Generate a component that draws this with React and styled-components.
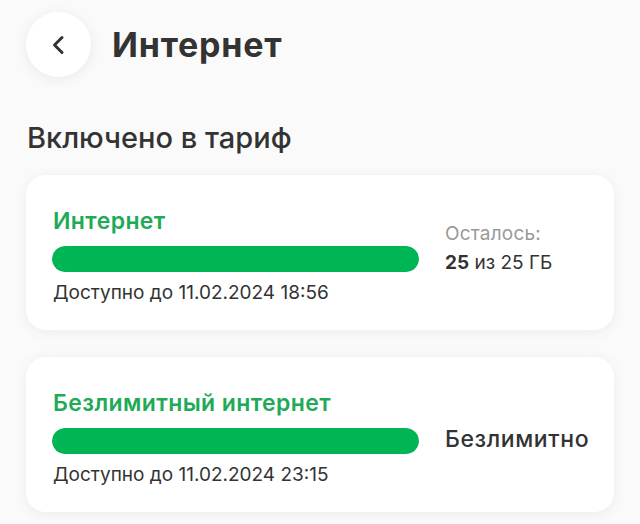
import styled, { createGlobalStyle } from "styled-components";

const packages = [
  {
    id: "base",
    title: "Интернет",
    until: "Доступно до 11.02.2024 18:56",
    left: 25,
    total: 25,
    unit: "ГБ",
  },
  {
    id: "unlim",
    title: "Безлимитный интернет",
    until: "Доступно до 11.02.2024 23:15",
    unlimited: true,
  },
];

export default function App() {
  return (
    <Page>
      <GlobalStyle />
      <Header>
        <BackButton type="button" aria-label="Назад">
          <svg width="14" height="20" viewBox="0 0 14 20" fill="none">
            <path
              d="M11 2.5L3.5 10L11 17.5"
              stroke="#333"
              strokeWidth="3"
              strokeLinecap="round"
              strokeLinejoin="round"
            />
          </svg>
        </BackButton>
        <PageTitle>Интернет</PageTitle>
      </Header>

      <SectionTitle>Включено в тариф</SectionTitle>

      <CardList>
        {packages.map((p) => (
          <Card key={p.id}>
            <Main>
              <CardTitle>{p.title}</CardTitle>
              <Bar>
                <BarFill
                  style={{
                    width: p.unlimited ? "100%" : `${(p.left / p.total) * 100}%`,
                  }}
                />
              </Bar>
              <Until>{p.until}</Until>
            </Main>
            <Side $unlimited={p.unlimited}>
              {p.unlimited ? (
                <Unlimited>Безлимитно</Unlimited>
              ) : (
                <>
                  <SideLabel>Осталось:</SideLabel>
                  <Remain>
                    <b>{p.left}</b> из {p.total} {p.unit}
                  </Remain>
                </>
              )}
            </Side>
          </Card>
        ))}
      </CardList>
    </Page>
  );
}

const GlobalStyle = createGlobalStyle`
  html, body {
    margin: 0;
    padding: 0;
    background: #fafafa;
  }
  body {
    font-family: Inter, "Noto Sans", Arial, sans-serif;
    color: #333;
  }
`;

const Page = styled.div`
  width: 640px;
  height: 524px;
  padding: 12px 26px 0;
  box-sizing: border-box;
  overflow: hidden;
`;

const Header = styled.div`
  display: flex;
  align-items: center;
  gap: 21px;
`;

const BackButton = styled.button`
  width: 65px;
  height: 65px;
  border: none;
  border-radius: 50%;
  background: #fff;
  box-shadow: 0 2px 14px rgba(0, 0, 0, 0.07);
  display: flex;
  align-items: center;
  justify-content: center;
  padding: 0 2px 0 0;
  cursor: pointer;
`;

const PageTitle = styled.h1`
  margin: 0;
  font-size: 34px;
  line-height: 40px;
  font-weight: 700;
  letter-spacing: 0.8px;
  color: #333;
`;

const SectionTitle = styled.h2`
  margin: 44px 0 0 1px;
  font-size: 29px;
  line-height: 34px;
  font-weight: 500;
  color: #333;
`;

const CardList = styled.div`
  display: flex;
  flex-direction: column;
  gap: 27px;
  margin-top: 20px;
`;

const Card = styled.div`
  display: grid;
  grid-template-columns: 367px 1fr;
  column-gap: 26px;
  align-items: center;
  padding: 32px 26px 25px 26px;
  background: #fff;
  border-radius: 20px;
  box-shadow: 0 2px 14px rgba(0, 0, 0, 0.06);
`;

const Main = styled.div`
  display: flex;
  flex-direction: column;
`;

const CardTitle = styled.div`
  font-size: 23px;
  line-height: 28px;
  font-weight: 600;
  letter-spacing: 0.4px;
  color: #1faa58;
  padding-left: 1px;
`;

const Bar = styled.div`
  height: 26px;
  margin-top: 11px;
  border-radius: 13px;
  background: #e8e8e8;
  overflow: hidden;
`;

const BarFill = styled.div`
  height: 100%;
  border-radius: 13px;
  background: #00b553;
`;

const Until = styled.div`
  margin-top: 9px;
  padding-left: 1px;
  font-size: 19px;
  line-height: 24px;
  color: #333;
`;

const Side = styled.div`
  display: flex;
  flex-direction: column;
  gap: 5px;
  margin-bottom: ${(p) => (p.$unlimited ? "0" : "16px")};
`;

const SideLabel = styled.div`
  font-size: 19px;
  line-height: 24px;
  letter-spacing: 0.2px;
  color: #999;
`;

const Remain = styled.div`
  font-size: 19px;
  line-height: 24px;
  color: #333;

  b {
    font-weight: 700;
  }
`;

const Unlimited = styled.div`
  font-size: 23px;
  line-height: 28px;
  font-weight: 500;
  letter-spacing: 0.6px;
  color: #333;
  margin-top: 2px;
`;
